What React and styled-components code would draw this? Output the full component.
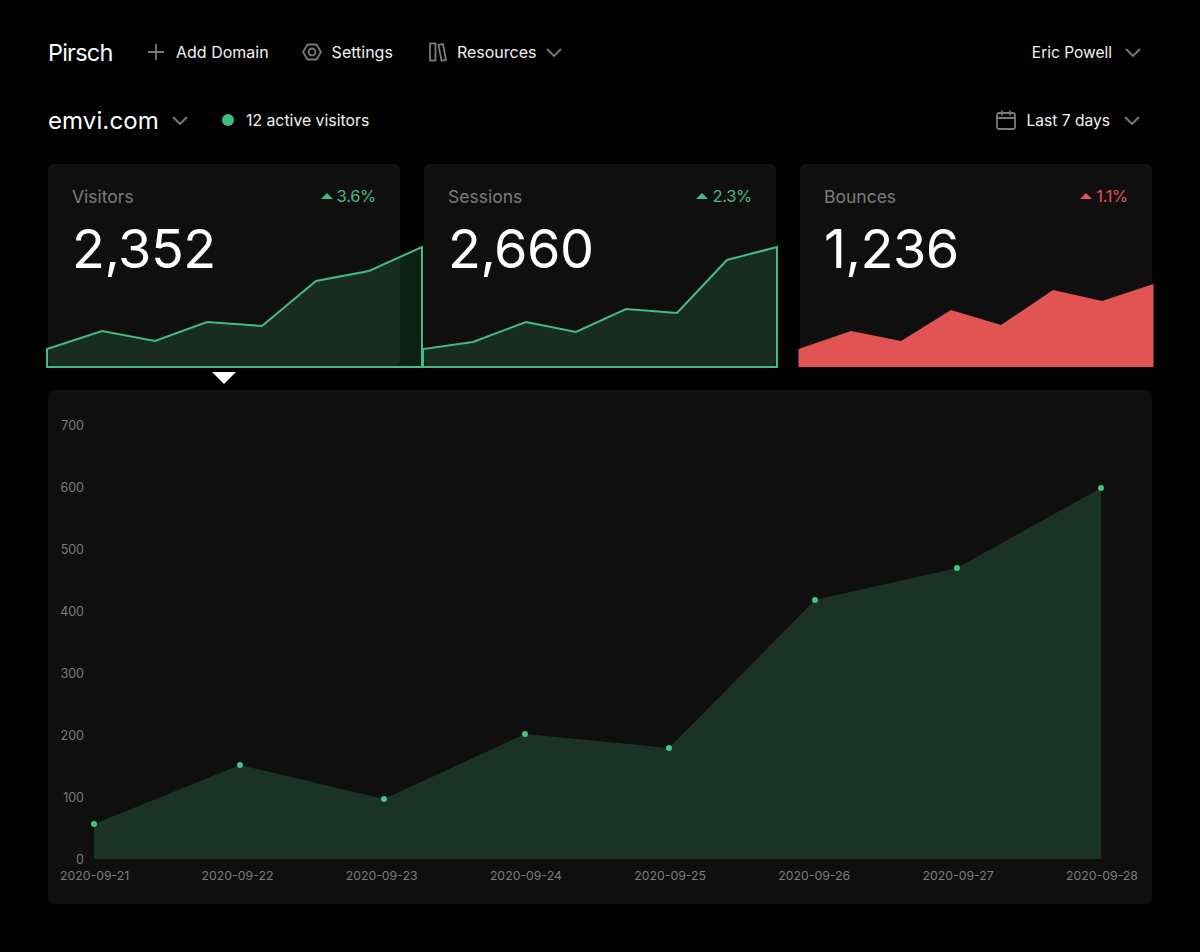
import React from 'react';
import styled, { createGlobalStyle } from 'styled-components';

const GREEN = '#45bb84';
const RED = '#e25454';
const MUTED = '#7c7c7c';

const GlobalStyle = createGlobalStyle`
  body {
    margin: 0;
    background: #000;
    color: #fff;
    font-family: Inter, "Noto Sans", sans-serif;
  }
`;

const Page = styled.div`
  width: 1200px;
  height: 952px;
  box-sizing: border-box;
  padding: 36px 48px 48px;
`;

const Row = styled.div`
  display: flex;
  align-items: center;
  justify-content: space-between;
  height: 32px;
  margin-top: ${(p) => p.$top || 0}px;
`;

const Group = styled.div`
  display: flex;
  align-items: center;
  gap: ${(p) => p.$gap || 0}px;
  margin-left: ${(p) => p.$left || 0}px;
`;

const Logo = styled.div`
  font-size: 23.5px;
  font-weight: 400;
  letter-spacing: -0.8px;
  width: 64px;
  margin-right: 36px;
`;

const NavItem = styled.div`
  display: flex;
  align-items: center;
  gap: ${(p) => p.$gap || 12}px;
  font-size: ${(p) => p.$size || 16}px;
  color: #f2f2f2;
  margin-right: ${(p) => p.$right || 0}px;
`;

const Icon = styled.svg`
  display: block;
  fill: none;
  stroke: #7b7b7b;
  stroke-width: 1.8;
  flex: none;
`;

const Domain = styled.div`
  font-size: 24px;
  width: 110px;
  margin-right: 14px;
  letter-spacing: 0.1px;
`;

const ActiveDot = styled.span`
  width: 12px;
  height: 12px;
  border-radius: 50%;
  background: ${GREEN};
  flex: none;
`;

const Cards = styled.div`
  display: grid;
  grid-template-columns: repeat(3, 352px);
  gap: 24px;
  margin-top: 28px;
`;

const Card = styled.div`
  position: relative;
  height: 202px;
  box-sizing: border-box;
  padding: 20px 24px 0;
  background: #0f0f0f;
  border-radius: 6px;
`;

const CardHead = styled.div`
  display: flex;
  align-items: center;
  justify-content: space-between;
  height: 24px;
`;

const CardTitle = styled.div`
  font-size: 17.5px;
  color: ${MUTED};
`;

const Change = styled.div`
  display: flex;
  align-items: center;
  gap: 4px;
  font-size: 16.5px;
  letter-spacing: -0.3px;
  color: ${(p) => (p.$down ? RED : GREEN)};
`;

const ChangeArrow = styled.span`
  width: 0;
  height: 0;
  border-left: 6px solid transparent;
  border-right: 6px solid transparent;
  border-bottom: 6px solid currentColor;
`;

const CardValue = styled.div`
  margin-top: 7px;
  font-size: 54px;
  line-height: 68px;
  letter-spacing: -0.5px;
  color: #fff;
`;

const Spark = styled.svg`
  position: absolute;
  left: -2px;
  bottom: -2px;
  overflow: visible;
`;

const Pointer = styled.span`
  position: absolute;
  left: 164px;
  bottom: -18px;
  width: 0;
  height: 0;
  border-left: 12px solid transparent;
  border-right: 12px solid transparent;
  border-top: 12px solid #fff;
`;

const ChartCard = styled.div`
  margin-top: 24px;
  height: 514px;
  box-sizing: border-box;
  padding: 28px 14px 0 12px;
  background: #0f0f0f;
  border-radius: 6px;
`;

const ChartBody = styled.div`
  display: flex;
  gap: 8px;
  margin-left: -12px;
  margin-right: -14px;
`;

const YAxis = styled.div`
  display: flex;
  flex-direction: column;
  justify-content: space-between;
  align-items: flex-end;
  box-sizing: border-box;
  width: 36px;
  height: 449px;
  padding-top: 1px;
  font-size: 12.5px;
  line-height: 14px;
  color: ${MUTED};
`;

const Plot = styled.svg`
  display: block;
  overflow: visible;
`;

const XAxis = styled.div`
  display: flex;
  justify-content: space-between;
  margin-top: 2px;
  font-size: 12.3px;
  line-height: 14px;
  color: ${MUTED};
`;

const Chevron = () => (
  <Icon width="16" height="9" viewBox="0 0 16 9">
    <path d="M1 1l7 7 7-7" />
  </Icon>
);

const toPoints = (points) => points.map((p) => p.join(',')).join(' ');

const Sparkline = ({ points, originX, red }) => {
  const width = points[points.length - 1][0] - originX + 2;
  const shifted = points.map(([x, y]) => [x - originX, y - 246]);
  const area = [[shifted[0][0], 121], ...shifted, [shifted[shifted.length - 1][0], 121]];
  return (
    <Spark width={width} height="122" viewBox={`0 0 ${width} 122`}>
      {red ? (
        <polygon points={toPoints(area)} fill={RED} />
      ) : (
        <polygon
          points={toPoints(area)}
          fill="rgba(69,187,132,0.17)"
          stroke={GREEN}
          strokeWidth="2"
        />
      )}
    </Spark>
  );
};

const stats = [
  {
    title: 'Visitors',
    change: '3.6%',
    value: '2,352',
    originX: 46,
    pointer: true,
    points: [[47, 349], [102, 331], [155, 341], [207, 322], [262, 326], [316, 281], [369, 271], [422, 247]],
  },
  {
    title: 'Sessions',
    change: '2.3%',
    value: '2,660',
    originX: 422,
    points: [[423, 349], [473, 342], [526, 322], [576, 332], [626, 309], [677, 313], [727, 260], [777, 247]],
  },
  {
    title: 'Bounces',
    change: '1.1%',
    value: '1,236',
    originX: 798,
    red: true,
    points: [[798.5, 349], [851, 331], [901, 341], [951, 310], [1001, 325], [1053, 290], [1102, 301], [1153.5, 284]],
  },
];

const chartPoints = [[94, 824], [240, 765], [384, 799], [525, 734], [669, 748], [815, 600], [957, 568], [1101, 488]];
const plotted = chartPoints.map(([x, y]) => [x - 92, y - 418]);
const baseline = 859 - 418;
const yLabels = ['700', '600', '500', '400', '300', '200', '100', '0'];
const dates = ['2020-09-21', '2020-09-22', '2020-09-23', '2020-09-24', '2020-09-25', '2020-09-26', '2020-09-27', '2020-09-28'];

const App = () => (
  <Page>
    <GlobalStyle />
    <Row>
      <Group>
        <Logo>Pirsch</Logo>
        <NavItem $right={33}>
          <Icon width="16" height="16" viewBox="0 0 16 16">
            <path d="M8 0v16M0 8h16" />
          </Icon>
          Add Domain
        </NavItem>
        <NavItem $gap={10} $right={36}>
          <Icon width="20" height="18" viewBox="0 0 20 18">
            <path d="M5.5 1.5h9L19 9l-4.500 7.500h-9L1 9z" />
            <circle cx="10" cy="9" r="3.5" />
          </Icon>
          Settings
        </NavItem>
        <NavItem $gap={10}>
          <Icon width="18" height="20" viewBox="0 0 18 20">
            <rect x="1" y="1.5" width="5.5" height="17" />
            <path d="M9.500 2.800l4.500-.8 3 16-4.500 .8z" />
          </Icon>
          Resources
          <Chevron />
        </NavItem>
      </Group>
      <NavItem $size={15.5} $gap={13} $right={11}>
        Eric Powell
        <Chevron />
      </NavItem>
    </Row>
    <Row $top={36}>
      <Group>
        <Domain>emvi.com</Domain>
        <Chevron />
        <Group $gap={12} $left={34}>
          <ActiveDot />
          <NavItem $size={15.8}>12 active visitors</NavItem>
        </Group>
      </Group>
      <NavItem $size={15.6} $gap={10} $right={12}>
        <Icon width="20" height="20" viewBox="0 0 20 20">
          <rect x="1" y="3" width="18" height="16" rx="2" />
          <path d="M1 8h18M6 0.500v5M14 0.500v5" />
        </Icon>
        <Group $gap={14}>
          Last 7 days
          <Chevron />
        </Group>
      </NavItem>
    </Row>
    <Cards>
      {stats.map((s) => (
        <Card key={s.title}>
          <CardHead>
            <CardTitle>{s.title}</CardTitle>
            <Change $down={s.red}>
              <ChangeArrow />
              {s.change}
            </Change>
          </CardHead>
          <CardValue>{s.value}</CardValue>
          <Sparkline points={s.points} originX={s.originX} red={s.red} />
          {s.pointer && <Pointer />}
        </Card>
      ))}
    </Cards>
    <ChartCard>
      <ChartBody>
        <YAxis>
          {yLabels.map((l) => (
            <span key={l}>{l}</span>
          ))}
        </YAxis>
        <Plot width="1012" height="448" viewBox="0 0 1012 448">
          <polygon
            points={toPoints([[plotted[0][0], baseline], ...plotted, [plotted[7][0], baseline]])}
            fill="#1b3327"
          />
          {plotted.map(([x, y]) => (
            <circle key={x} cx={x} cy={y} r="3" fill="#43c486" />
          ))}
        </Plot>
      </ChartBody>
      <XAxis>
        {dates.map((d) => (
          <span key={d}>{d}</span>
        ))}
      </XAxis>
    </ChartCard>
  </Page>
);

export default App;
